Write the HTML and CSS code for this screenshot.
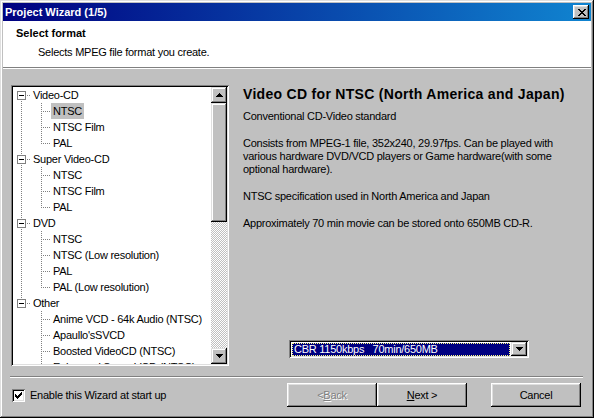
FILE: index.html
```html
<!DOCTYPE html>
<html>
<head>
<meta charset="utf-8">
<link rel="stylesheet" href="styles.css">
</head>
<body>
<div class="window">
  <div class="titlebar">
    <span class="title">Project Wizard (1/5)</span>
    <span class="close"><svg width="8" height="7" viewBox="0 0 8 7"><path d="M0 0h2v1H0zM6 0h2v1H6zM1 1h2v1H1zM5 1h2v1H5zM2 2h4v1H2zM3 3h2v1H3zM2 4h4v1H2zM1 5h2v1H1zM5 5h2v1H5zM0 6h2v1H0zM6 6h2v1H6z" fill="#000"/></svg></span>
  </div>
  <div class="header">
    <div class="h-title">Select format</div>
    <div class="h-sub">Selects MPEG file format you create.</div>
  </div>
  <div class="main">
    <div class="tree">
      <div class="tree-list">
        <div class="row"><svg class="g" width="18" height="16"><path class="dot" d="M8.5 14V16"/><rect x="4.5" y="4.5" width="8" height="8" fill="#fff" stroke="#808080"/><path d="M6 8.5h5" stroke="#000"/><path class="dot" d="M14 8.5H18"/></svg><span class="lbl">Video-CD</span></div>
        <div class="row"><svg class="g" width="38" height="16"><path class="dot" d="M8.5 0V16"/><path class="dot" d="M28.5 0V16"/><path class="dot" d="M30 8.5H38"/></svg><span class="lbl sel">NTSC</span></div>
        <div class="row"><svg class="g" width="38" height="16"><path class="dot" d="M8.5 0V16"/><path class="dot" d="M28.5 0V16"/><path class="dot" d="M30 8.5H38"/></svg><span class="lbl">NTSC Film</span></div>
        <div class="row"><svg class="g" width="38" height="16"><path class="dot" d="M8.5 0V16"/><path class="dot" d="M28.5 0V9"/><path class="dot" d="M30 8.5H38"/></svg><span class="lbl">PAL</span></div>

        <div class="row"><svg class="g" width="18" height="16"><path class="dot" d="M8.5 0V4"/><path class="dot" d="M8.5 14V16"/><rect x="4.5" y="4.5" width="8" height="8" fill="#fff" stroke="#808080"/><path d="M6 8.5h5" stroke="#000"/><path class="dot" d="M14 8.5H18"/></svg><span class="lbl">Super Video-CD</span></div>
        <div class="row"><svg class="g" width="38" height="16"><path class="dot" d="M8.5 0V16"/><path class="dot" d="M28.5 0V16"/><path class="dot" d="M30 8.5H38"/></svg><span class="lbl">NTSC</span></div>
        <div class="row"><svg class="g" width="38" height="16"><path class="dot" d="M8.5 0V16"/><path class="dot" d="M28.5 0V16"/><path class="dot" d="M30 8.5H38"/></svg><span class="lbl">NTSC Film</span></div>
        <div class="row"><svg class="g" width="38" height="16"><path class="dot" d="M8.5 0V16"/><path class="dot" d="M28.5 0V9"/><path class="dot" d="M30 8.5H38"/></svg><span class="lbl">PAL</span></div>

        <div class="row"><svg class="g" width="18" height="16"><path class="dot" d="M8.5 0V4"/><path class="dot" d="M8.5 14V16"/><rect x="4.5" y="4.5" width="8" height="8" fill="#fff" stroke="#808080"/><path d="M6 8.5h5" stroke="#000"/><path class="dot" d="M14 8.5H18"/></svg><span class="lbl">DVD</span></div>
        <div class="row"><svg class="g" width="38" height="16"><path class="dot" d="M8.5 0V16"/><path class="dot" d="M28.5 0V16"/><path class="dot" d="M30 8.5H38"/></svg><span class="lbl">NTSC</span></div>
        <div class="row"><svg class="g" width="38" height="16"><path class="dot" d="M8.5 0V16"/><path class="dot" d="M28.5 0V16"/><path class="dot" d="M30 8.5H38"/></svg><span class="lbl">NTSC (Low resolution)</span></div>
        <div class="row"><svg class="g" width="38" height="16"><path class="dot" d="M8.5 0V16"/><path class="dot" d="M28.5 0V16"/><path class="dot" d="M30 8.5H38"/></svg><span class="lbl">PAL</span></div>
        <div class="row"><svg class="g" width="38" height="16"><path class="dot" d="M8.5 0V16"/><path class="dot" d="M28.5 0V9"/><path class="dot" d="M30 8.5H38"/></svg><span class="lbl">PAL (Low resolution)</span></div>

        <div class="row"><svg class="g" width="18" height="16"><path class="dot" d="M8.5 0V4"/><rect x="4.5" y="4.5" width="8" height="8" fill="#fff" stroke="#808080"/><path d="M6 8.5h5" stroke="#000"/><path class="dot" d="M14 8.5H18"/></svg><span class="lbl">Other</span></div>
        <div class="row"><svg class="g" width="38" height="16"><path class="dot" d="M28.5 0V16"/><path class="dot" d="M30 8.5H38"/></svg><span class="lbl">Anime VCD - 64k Audio (NTSC)</span></div>
        <div class="row"><svg class="g" width="38" height="16"><path class="dot" d="M28.5 0V16"/><path class="dot" d="M30 8.5H38"/></svg><span class="lbl">Apaullo'sSVCD</span></div>
        <div class="row"><svg class="g" width="38" height="16"><path class="dot" d="M28.5 0V16"/><path class="dot" d="M30 8.5H38"/></svg><span class="lbl">Boosted VideoCD (NTSC)</span></div>
        <div class="row"><svg class="g" width="38" height="16"><path class="dot" d="M28.5 0V16"/><path class="dot" d="M30 8.5H38"/></svg><span class="lbl">Enhanced Super VCD (NTSC)</span></div>
      </div>
      <div class="vscroll">
        <div class="sbtn"><svg width="7" height="4" viewBox="0 0 7 4"><path d="M3 0h1v1h1v1h1v1h1v1H0V3h1V2h1V1h1z" fill="#000"/></svg></div>
        <div class="thumb"></div>
        <div class="track"></div>
        <div class="sbtn"><svg width="7" height="4" viewBox="0 0 7 4"><path d="M0 0h7v1H6v1H5v1H4v1H3V3H2V2H1V1H0z" fill="#000"/></svg></div>
      </div>
    </div>
    <div class="info">
      <h1>Video CD for NTSC (North America and Japan)</h1>
      <p>Conventional CD-Video standard</p>
      <p>Consists from MPEG-1 file, 352x240, 29.97fps. Can be played with various hardware DVD/VCD players or Game hardware(with some optional hardware).</p>
      <p>NTSC specification used in North America and Japan</p>
      <p>Approximately 70 min movie can be stored onto 650MB CD-R.</p>
      <div class="combo">
        <div class="combo-val"><span>CBR 1150kbps&nbsp;&nbsp;&nbsp;70min/650MB</span></div>
        <div class="sbtn combo-btn"><svg width="7" height="4" viewBox="0 0 7 4"><path d="M0 0h7v1H6v1H5v1H4v1H3V3H2V2H1V1H0z" fill="#000"/></svg></div>
      </div>
    </div>
  </div>
  <div class="sep"></div>
  <div class="footer">
    <span class="check"><svg width="7" height="7" viewBox="0 0 7 7"><path d="M6 0h1v1H6zM5 1h2v1H5zM0 2h1v1H0zM4 2h3v1H4zM0 3h2v1H0zM3 3h3v1H3zM0 4h5v1H0zM1 5h3v1H1zM2 6h1v1H2z" fill="#000"/></svg></span>
    <span class="check-lbl">Enable this Wizard at start up</span>
    <div class="buttons">
      <span class="btn disabled">&lt; <u>B</u>ack</span>
      <span class="btn"><u>N</u>ext &gt;</span>
      <span class="btn cancel">Cancel</span>
    </div>
  </div>
</div>
</body>
</html>
```

FILE: styles.css
```css
html, body {
  margin: 0;
  padding: 0;
  background: #c0c0c0;
}
body {
  font-family: "Liberation Sans", Arial, sans-serif;
  font-size: 11px;
  line-height: 13px;
  letter-spacing: -0.25px;
  color: #000;
}
.window {
  width: 594px;
  height: 418px;
  box-sizing: border-box;
  padding: 3px;
  background: #c0c0c0;
  box-shadow: inset -1px -1px #000, inset 1px 1px #dfdfdf, inset -2px -2px #808080, inset 2px 2px #fff;
  display: flex;
  flex-direction: column;
  overflow: hidden;
}
.titlebar {
  height: 18px;
  flex: none;
  background: linear-gradient(to right, #000080, #1084d0);
  display: flex;
  align-items: center;
  padding-left: 2px;
  padding-right: 2px;
}
.title {
  flex: 1;
  color: #fff;
  font-weight: bold;
  letter-spacing: 0;
}
.close {
  width: 16px;
  height: 14px;
  box-sizing: border-box;
  background: #c0c0c0;
  box-shadow: inset -1px -1px #000, inset 1px 1px #fff, inset -2px -2px #808080, inset 2px 2px #dfdfdf;
  display: flex;
  align-items: center;
  justify-content: center;
  padding-left: 1px;
}
.close svg, .sbtn svg, .check svg { display: block; shape-rendering: crispEdges; }
.header {
  height: 47px;
  flex: none;
  box-sizing: border-box;
  background: #fff;
  border-bottom: 1px solid #808080;
  box-shadow: 0 1px #fff;
  padding: 6px 0 0 13px;
}
.h-title {
  font-weight: bold;
  letter-spacing: 0;
}
.h-sub {
  margin-top: 6px;
  padding-left: 22px;
}
.main {
  display: flex;
  margin-top: 17px;
  height: 281px;
  padding-left: 8px;
  flex: none;
}
.tree {
  width: 218px;
  height: 281px;
  box-sizing: border-box;
  padding: 2px;
  display: flex;
  box-shadow: inset 1px 1px #808080, inset -1px -1px #fff, inset 2px 2px #000, inset -2px -2px #dfdfdf;
}
.tree-list {
  flex: 1;
  background: #fff;
  overflow: hidden;
  white-space: nowrap;
}
.row {
  height: 16px;
  display: flex;
  align-items: stretch;
}
.g { display: block; flex: none; }
.dot {
  stroke: #808080;
  stroke-dasharray: 1 1;
  fill: none;
  shape-rendering: crispEdges;
}
.lbl {
  padding: 0 2px;
  line-height: 16px;
  height: 16px;
}
.lbl.sel { background: #c0c0c0; }
.vscroll {
  width: 16px;
  flex: none;
  display: flex;
  flex-direction: column;
}
.sbtn {
  width: 16px;
  height: 16px;
  flex: none;
  box-sizing: border-box;
  background: #c0c0c0;
  box-shadow: inset -1px -1px #000, inset 1px 1px #dfdfdf, inset -2px -2px #808080, inset 2px 2px #fff;
  display: flex;
  align-items: center;
  justify-content: center;
}
.thumb {
  height: 119px;
  flex: none;
  background: #c0c0c0;
  box-shadow: inset -1px -1px #000, inset 1px 1px #dfdfdf, inset -2px -2px #808080, inset 2px 2px #fff;
}
.track {
  flex: 1;
  background: repeating-conic-gradient(#fff 0 25%, #c0c0c0 0 50%) 0 0 / 2px 2px;
}
.info {
  flex: 1;
  margin-left: 14px;
  padding-top: 1px;
  display: flex;
  flex-direction: column;
  padding-right: 10px;
}
.info h1 {
  margin: 0 0 8px;
  font-size: 14px;
  line-height: 16px;
  font-weight: bold;
  letter-spacing: 0.3px;
}
.info p {
  margin: 0 0 14px;
}
.combo {
  margin-top: auto;
  margin-bottom: 8px;
  margin-left: 46px;
  width: 240px;
  height: 18px;
  box-sizing: border-box;
  padding: 2px;
  background: #fff;
  display: flex;
  box-shadow: inset 1px 1px #808080, inset -1px -1px #fff, inset 2px 2px #000, inset -2px -2px #dfdfdf;
}
.combo-val {
  flex: 1;
  margin: 1px 1px 0 1px;
  background: #000080;
  color: #fff;
  font-family: "Liberation Sans", Arial, sans-serif;
  outline: 1px dotted #ffff80;
  outline-offset: -1px;
  line-height: 13px;
  padding-left: 2px;
  white-space: nowrap;
  overflow: hidden;
}
.combo-btn {
  height: 14px;
}
.sep {
  margin: 10px 8px 0 7px;
  border-top: 1px solid #808080;
  border-bottom: 1px solid #fff;
  flex: none;
}
.footer {
  display: flex;
  align-items: center;
  margin-top: 5px;
  height: 24px;
  padding-left: 9px;
  padding-right: 10px;
}
.check {
  width: 13px;
  height: 13px;
  box-sizing: border-box;
  background: #fff;
  box-shadow: inset 1px 1px #808080, inset -1px -1px #fff, inset 2px 2px #000, inset -2px -2px #dfdfdf;
  display: flex;
  align-items: center;
  justify-content: center;
  margin-top: 1px;
}
.check-lbl {
  margin-left: 5px;
  flex: 1;
}
.buttons {
  display: flex;
}
.btn {
  width: 90px;
  height: 24px;
  box-sizing: border-box;
  display: flex;
  align-items: center;
  justify-content: center;
  background: #c0c0c0;
  box-shadow: inset -1px -1px #000, inset 1px 1px #fff, inset -2px -2px #808080, inset 2px 2px #dfdfdf;
}
.btn.disabled {
  color: #808080;
  text-shadow: 1px 1px 0 #fff;
}
.btn.cancel {
  margin-left: 24px;
}
```
